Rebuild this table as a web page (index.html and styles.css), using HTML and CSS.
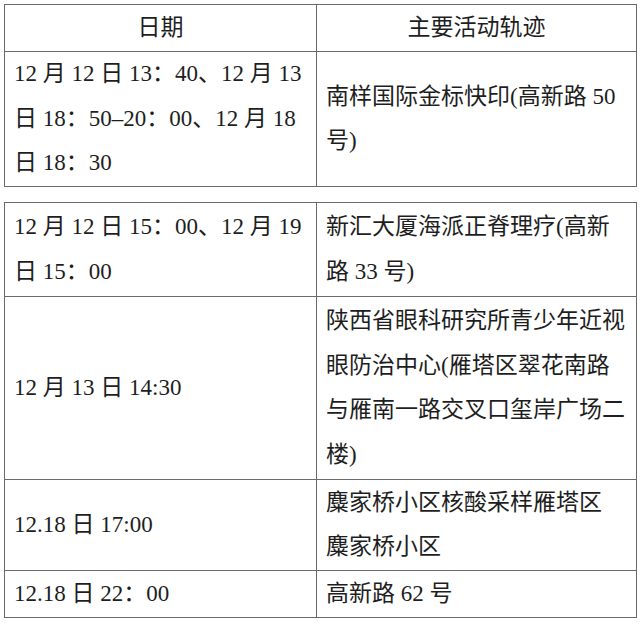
FILE: index.html
```html
<!DOCTYPE html>
<html lang="zh-CN">
<head>
<meta charset="utf-8">
<title>主要活动轨迹</title>
<link rel="stylesheet" href="styles.css">
</head>
<body>
<div class="page">
  <table class="grid">
    <colgroup><col class="c-date"><col class="c-place"></colgroup>
    <tr class="h-head">
      <th>日期</th>
      <th>主要活动轨迹</th>
    </tr>
    <tr class="h-135">
      <td>12 月 12 日 13：40、12 月 13<br>日 18：50–20：00、12 月 18<br>日 18：30</td>
      <td>南样国际金标快印(高新路 50<br>号)</td>
    </tr>
  </table>

  <table class="grid">
    <colgroup><col class="c-date"><col class="c-place"></colgroup>
    <tr class="h-94">
      <td>12 月 12 日 15：00、12 月 19<br>日 15：00</td>
      <td>新汇大厦海派正脊理疗(高新<br>路 33 号)</td>
    </tr>
    <tr class="h-183">
      <td>12 月 13 日 14:30</td>
      <td>陕西省眼科研究所青少年近视<br>眼防治中心(雁塔区翠花南路<br>与雁南一路交叉口玺岸广场二<br>楼)</td>
    </tr>
    <tr class="h-91">
      <td>12.18 日 17:00</td>
      <td>麋家桥小区核酸采样雁塔区<br>麋家桥小区</td>
    </tr>
    <tr class="h-47">
      <td>12.18 日 22：00</td>
      <td>高新路 62 号</td>
    </tr>
  </table>
</div>
</body>
</html>
```

FILE: styles.css
```css
html, body {
  margin: 0;
  padding: 0;
  background: #ffffff;
}

.page {
  padding: 4px 0 0 4px;
  display: flex;
  flex-direction: column;
  gap: 15px;
  align-items: flex-start;
}

.grid {
  width: 632px;
  border-collapse: collapse;
  table-layout: fixed;
  font-family: "Liberation Serif", "Times New Roman", "Noto Sans CJK SC", serif;
  font-size: 23px;
  font-weight: 400;
  line-height: 44.5px;
  color: #1e1e1e;
}

.c-date { width: 312px; }
.c-place { width: 320px; }

.grid th,
.grid td {
  border: 1px solid #6a6a6a;
  padding: 0 8px 0 9px;
  vertical-align: middle;
  text-align: left;
  white-space: nowrap;
  overflow: hidden;
}

.grid th {
  font-weight: 400;
  text-align: center;
  padding: 0;
}

.h-head { height: 47px; }
.h-135 { height: 135px; }
.h-94 { height: 94px; }
.h-183 { height: 183px; }
.h-91 { height: 91px; }
.h-47 { height: 47px; }
```
